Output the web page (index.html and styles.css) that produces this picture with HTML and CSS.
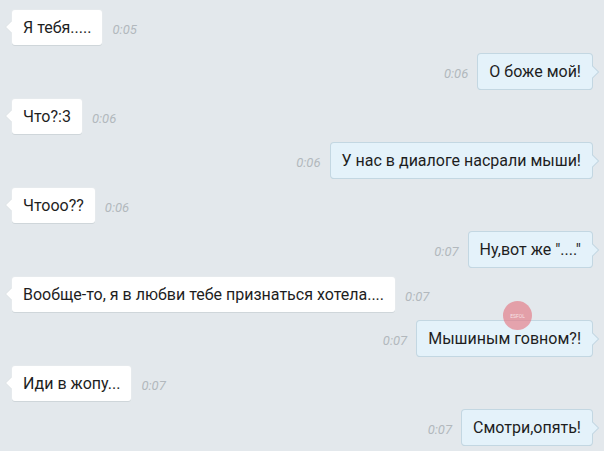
FILE: index.html
```html
<!DOCTYPE html>
<html lang="ru">
<head>
    <meta charset="UTF-8" />
    <title>Диалог</title>
    <link rel="stylesheet" href="styles.css">
</head>
<body>
<div class="chat">
    <div class="stub"></div>

    <div class="row in">
        <div class="bubble">Я тебя.....</div>
        <span class="time">0:05</span>
    </div>
    <div class="row out">
        <span class="time">0:06</span>
        <div class="bubble">О боже мой!</div>
    </div>
    <div class="row in">
        <div class="bubble">Что?:3</div>
        <span class="time">0:06</span>
    </div>
    <div class="row out">
        <span class="time">0:06</span>
        <div class="bubble">У нас в диалоге насрали мыши!</div>
    </div>
    <div class="row in">
        <div class="bubble">Чтоoo??</div>
        <span class="time">0:06</span>
    </div>
    <div class="row out">
        <span class="time">0:07</span>
        <div class="bubble">Ну,вот же "...."</div>
    </div>
    <div class="row in">
        <div class="bubble">Вообще-то, я в любви тебе признаться хотела....</div>
        <span class="time">0:07</span>
    </div>
    <div class="row out">
        <span class="time">0:07</span>
        <div class="bubble">Мышиным говном?!</div>
    </div>
    <div class="row in">
        <div class="bubble">Иди в жопу...</div>
        <span class="time">0:07</span>
    </div>
    <div class="row out">
        <span class="time">0:07</span>
        <div class="bubble">Смотри,опять!</div>
    </div>

    <!-- watermark stamp -->
    <div class="stamp">esfol</div>
</div>
</body>
</html>
```

FILE: styles.css
```css
* {
    box-sizing: border-box;
}

body {
    margin: 0;
    background: #e3e8ec;
    font-family: Roboto, 'Noto Sans', sans-serif;
    overflow: hidden;
}

.chat {
    position: relative;
    display: flex;
    flex-direction: column;
    gap: 9.5px;
    padding: 0 12px;
    height: 451px;
}

.stub {
    width: 40px;
    height: 34px;
    margin-top: -34px;
    background: #fff;
    border-bottom: 1px solid #d2d8dc;
    border-radius: 3px;
}

.row {
    display: flex;
    align-items: center;
    gap: 10px;
}

.row.out {
    justify-content: flex-end;
}

.bubble {
    position: relative;
    height: 35px;
    padding: 0 11px;
    display: flex;
    align-items: center;
    font-size: 16px;
    color: #1e1e1e;
    border-radius: 3px;
    white-space: nowrap;
}

.in .bubble {
    background: #fff;
    box-shadow: 0 1px 0 #cfd6da, 0 0 0 1px #e6eaed;
}

.out .bubble {
    background: #e4f2fa;
    box-shadow: 0 0 0 1px #c3d7e2, 0 1px 0 #b9cdd8;
}

/* tails */
.bubble::before {
    content: '';
    position: absolute;
    top: 50%;
    width: 9px;
    height: 9px;
    transform: translateY(-50%) rotate(45deg);
}

.in .bubble::before {
    left: -4px;
    background: #fff;
    box-shadow: -1px 1px 0 #e0e5e8;
}

.out .bubble::before {
    right: -4px;
    background: #e4f2fa;
    box-shadow: 1px -1px 0 #c3d7e2;
}

.time {
    font-size: 13px;
    font-style: italic;
    color: #b2b8bd;
    padding-top: 4px;
}

.stamp {
    position: absolute;
    left: 503px;
    top: 301px;
    width: 29px;
    height: 29px;
    border-radius: 50%;
    background: rgba(228, 120, 132, 0.65);
    color: rgba(255, 255, 255, 0.7);
    font-size: 5px;
    text-transform: uppercase;
    display: flex;
    align-items: center;
    justify-content: center;
}
```
